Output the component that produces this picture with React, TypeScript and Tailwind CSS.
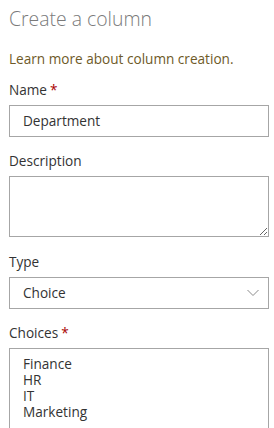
import React from "react";

function Label({ text, required }: { text: string; required?: boolean }) {
  return (
    <div className="py-[5px] text-[13.6px] leading-[20px] text-[#333333]">
      {text}
      {required && <span className="ml-[3px] text-[#a80000]">*</span>}
    </div>
  );
}

export default function App() {
  return (
    <div
      className="w-[274px] h-[428px] overflow-hidden bg-white pl-[9px] pr-[5px]"
      style={{ fontFamily: '"Open Sans", "Noto Sans", sans-serif' }}
    >
      <h1 className="pt-[5px] text-[19.4px] leading-[28px] font-light text-[#7a7a7a]">
        Create a column
      </h1>
      <p className="mt-[16px] text-[13.6px] leading-[20px] text-[#6e5a28]">
        Learn more about column creation.
      </p>

      <div className="mt-[6px]">
        <Label text="Name" required />
        <div className="h-[32px] border border-[#a6a6a6] px-[13px] flex items-center text-[13.6px] leading-[20px] text-[#333333]">
          Department
        </div>
      </div>

      <div className="mt-[9px]">
        <Label text="Description" />
        <textarea
          className="block w-full h-[61px] border border-[#a6a6a6] outline-none px-[12px] py-[6px] text-[14px]"
          defaultValue=""
        />
      </div>

      <div className="mt-[10px]">
        <Label text="Type" />
        <div className="h-[32px] border border-[#a6a6a6] pl-[13px] pr-[9px] flex items-center justify-between text-[13.6px] leading-[20px] text-[#333333]">
          <span>Choice</span>
          <svg width="12" height="8" viewBox="0 0 12 8">
            <polyline
              points="0.5,1 6,6.5 11.5,1"
              fill="none"
              stroke="#8a8a8a"
              strokeWidth="1"
            />
          </svg>
        </div>
      </div>

      <div className="mt-[9px]">
        <Label text="Choices" required />
        <div className="h-[100px] border border-[#a6a6a6] pl-[13px] pt-[7px] text-[13.6px] leading-[16px] text-[#333333]">
          <div>Finance</div>
          <div>HR</div>
          <div>IT</div>
          <div>Marketing</div>
        </div>
      </div>
    </div>
  );
}
